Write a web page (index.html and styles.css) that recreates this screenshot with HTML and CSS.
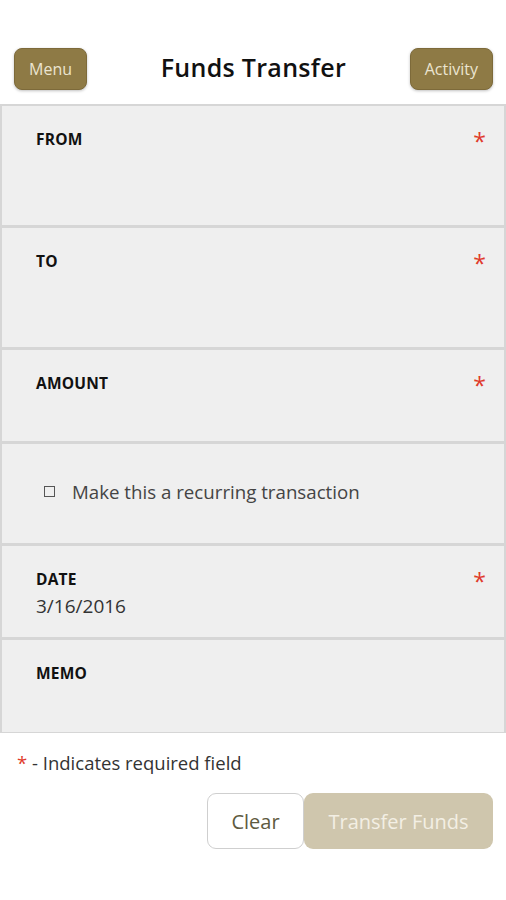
FILE: index.html
```html
<!DOCTYPE html>
<html lang="en">
<head>
    <meta charset="UTF-8">
    <meta name="viewport" content="width=device-width, initial-scale=1.0">
    <title>Funds Transfer</title>
    <link rel="stylesheet" href="styles.css">
</head>
<body>

<header class="topbar">
    <button class="nav-btn">Menu</button>
    <h1>Funds Transfer</h1>
    <button class="nav-btn">Activity</button>
</header>

<div class="form">
    <div class="field field-tall">
        <span class="label">FROM</span>
        <span class="req">*</span>
    </div>
    <div class="field field-tall">
        <span class="label">TO</span>
        <span class="req">*</span>
    </div>
    <div class="field">
        <span class="label">AMOUNT</span>
        <span class="req">*</span>
    </div>
    <div class="field field-check">
        <label class="check"><span class="box"></span>Make this a recurring transaction</label>
    </div>
    <div class="field">
        <span class="label">DATE</span>
        <span class="req">*</span>
        <div class="value">3/16/2016</div>
    </div>
    <div class="field field-last">
        <span class="label">MEMO</span>
    </div>
</div>

<p class="note"><span class="req-note">*</span> - Indicates required field</p>

<div class="actions">
    <button class="btn-clear">Clear</button>
    <button class="btn-submit">Transfer Funds</button>
</div>

</body>
</html>
```

FILE: styles.css
```css
body {
    font-family: "Open Sans", "Noto Sans", sans-serif;
    margin: 0;
    padding: 0;
    background-color: #fff;
    color: #222;
}
.topbar {
    display: flex;
    align-items: center;
    justify-content: space-between;
    padding: 48px 13px 0 14px;
    height: 42px;
    margin-bottom: 14px;
}
.topbar h1 {
    font-size: 25px;
    font-weight: 600;
    margin: 0 0 4px 10px;
    color: #111;
    letter-spacing: 0.3px;
}
.nav-btn {
    height: 42px;
    padding: 0 14px;
    background-color: #8e7a45;
    border: 1px solid #7d6a3a;
    border-radius: 8px;
    box-shadow: 0 1px 3px rgba(0, 0, 0, 0.25);
    color: #ebe4d0;
    font-family: inherit;
    font-size: 16px;
}
.form {
    background-color: #efefef;
    border: 2px solid #d6d6d6;
    border-bottom-width: 1px;
}
.field {
    position: relative;
    height: 94px;
    padding: 22px 34px 0;
    box-sizing: border-box;
    border-bottom: 3px solid #d6d6d6;
}
.field-tall {
    height: 122px;
}
.field-check {
    height: 102px;
    padding-top: 35px;
}
.field-last {
    height: 92px;
    border-bottom: none;
}
.label {
    font-size: 15.5px;
    font-weight: 700;
    color: #111;
    letter-spacing: 0.2px;
}
.req {
    position: absolute;
    right: 18px;
    top: 19px;
    color: #e03a2a;
    font-size: 23px;
}
.value {
    font-size: 19px;
    color: #333;
    margin-top: 3px;
}
.check {
    display: flex;
    align-items: center;
    font-size: 18.7px;
    color: #444;
    margin-left: 8px;
}
.box {
    width: 9px;
    height: 9px;
    border: 1px solid #555;
    margin-right: 17px;
}
.note {
    font-size: 18.5px;
    color: #333;
    margin: 17px 0 0 17px;
}
.req-note {
    color: #e03a2a;
}
.actions {
    display: flex;
    justify-content: flex-end;
    padding: 18px 13px 0 0;
}
.actions button {
    height: 56px;
    font-family: inherit;
    font-size: 20px;
    border-radius: 9px;
}
.btn-clear {
    width: 97px;
    background-color: #fff;
    border: 1px solid #cfcfcf;
    color: #5e5a40;
}
.btn-submit {
    width: 189px;
    background-color: #cfc6ad;
    border: none;
    color: #f3efe4;
}
```
